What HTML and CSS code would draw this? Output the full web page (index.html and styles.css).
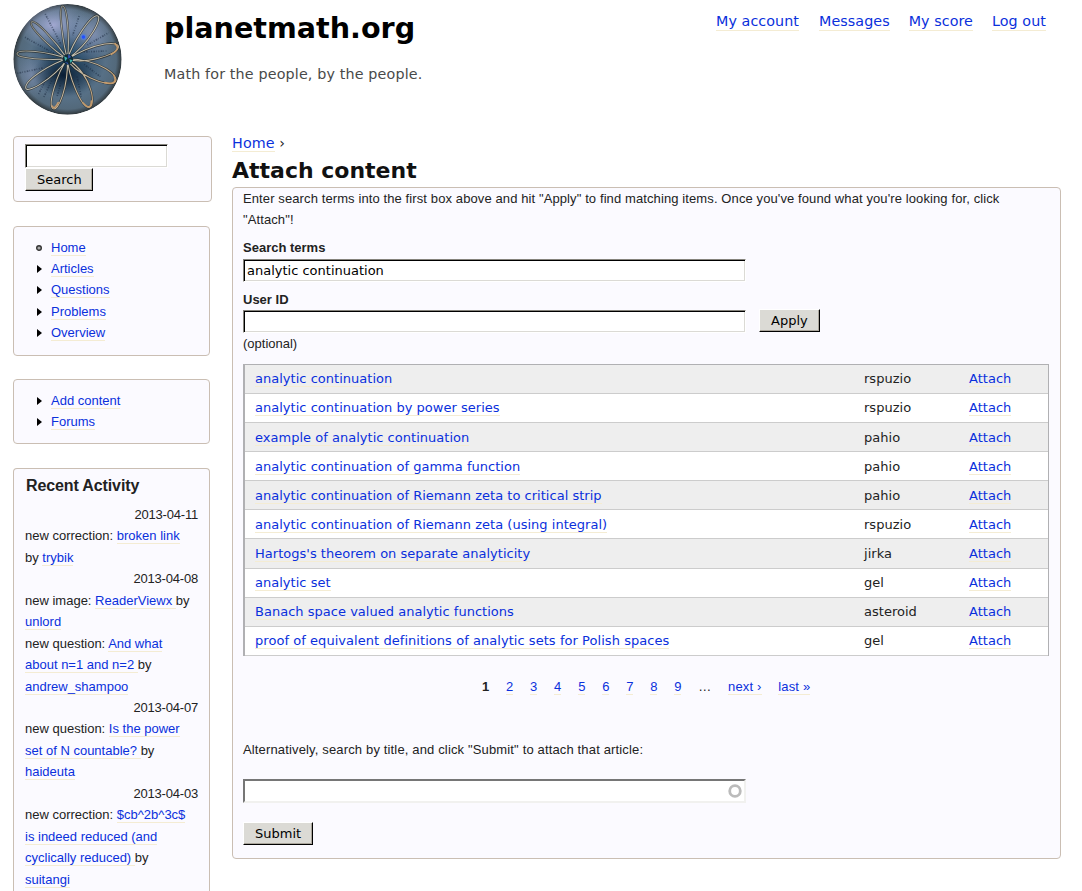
FILE: index.html
```html
<!DOCTYPE html>
<html lang="en">
<head>
<meta charset="utf-8">
<title>Attach content | planetmath.org</title>
<link rel="stylesheet" href="styles.css">
</head>
<body>
<header class="header">
  <svg class="logo" viewBox="39 12 328 333" preserveAspectRatio="none" aria-label="planetmath.org">
    <defs>
      <radialGradient id="orb" cx="50%" cy="50%" r="50%">
        <stop offset="0" stop-color="#204c6b"/><stop offset=".35" stop-color="#36546f"/><stop offset=".7" stop-color="#577086"/><stop offset=".9" stop-color="#53697b"/><stop offset="1" stop-color="#30383c"/>
      </radialGradient>
      <radialGradient id="glow"><stop offset="0" stop-color="#aaaed9" stop-opacity=".9"/><stop offset="1" stop-color="#8ea4c8" stop-opacity="0"/></radialGradient>
      <radialGradient id="shade"><stop offset="0" stop-color="#071b31" stop-opacity=".95"/><stop offset="1" stop-color="#152b3e" stop-opacity="0"/></radialGradient>
      <linearGradient id="rim" gradientUnits="userSpaceOnUse" x1="60" y1="40" x2="340" y2="310"><stop offset="0" stop-color="#77786f"/><stop offset=".5" stop-color="#c4c2b5"/><stop offset="1" stop-color="#c19a6b"/></linearGradient>
      <clipPath id="disc"><ellipse cx="203" cy="178" rx="163" ry="166"/></clipPath>
    </defs>
    <g clip-path="url(#disc)">
      <ellipse cx="203" cy="178" rx="163" ry="166" fill="url(#orb)"/>
      <ellipse cx="160" cy="75" rx="115" ry="75" fill="url(#glow)"/>
      <ellipse cx="275" cy="105" rx="75" ry="80" fill="url(#glow)" opacity=".6"/>
      <ellipse cx="95" cy="225" rx="70" ry="75" fill="url(#glow)" opacity=".4"/>
      <ellipse cx="190" cy="225" rx="95" ry="65" fill="url(#shade)"/>
    </g>
    <g fill="none" stroke="#18253b" stroke-width="5" stroke-dasharray="3 4 5 3 2 5" opacity=".5">
      <path d="M136 42l48 92M75 112l87 48M52 220l76-16M116 282l25-49M132 291l23-49M172 288l12-42M238 48l-20 60M263 135l64-37M252 156l68-3M253 193l50 38M232 230l12 60"/>
    </g>
    <path fill="none" stroke="#242521" stroke-opacity=".75" stroke-width="6.5" stroke-linejoin="round" d="M203 177C190 135 174 18 188 18S210 110 203 177M203 177C165 156 86 82 94 67S167 123 203 177M203 177C145 181 48 176 51 161S145 154 203 177M203 177C158 188 78 238 77 262S160 237 203 177M203 177C171 219 143 315 159 326S205 262 203 177M203 177C205 223 242 319 266 322S282 230 203 177M203 177C220 218 324 264 345 247S298 177 203 177M203 177C252 195 350 165 356 143S291 125 203 177M203 177C219 126 272 46 292 47S272 129 203 177"/>
    <path fill="none" stroke="url(#rim)" stroke-width="3.2" d="M203 177C190 135 174 18 188 18S210 110 203 177M203 177C165 156 86 82 94 67S167 123 203 177M203 177C145 181 48 176 51 161S145 154 203 177M203 177C158 188 78 238 77 262S160 237 203 177M203 177C171 219 143 315 159 326S205 262 203 177M203 177C205 223 242 319 266 322S282 230 203 177M203 177C220 218 324 264 345 247S298 177 203 177M203 177C252 195 350 165 356 143S291 125 203 177M203 177C219 126 272 46 292 47S272 129 203 177"/>
    <g fill="none" stroke="#c39a6c" stroke-width="5" stroke-linecap="round"><path d="M315 248Q358 257 342 225M335 163Q364 147 346 131M250 309Q274 335 275 303M157 318Q163 332 175 308"/></g>
    <circle cx="204" cy="178" r="16" fill="#102b36"/><path d="M193 169l10 5-7 10zM209 178l10 3-7 8z" fill="#3eb6b0"/><path d="M205 162l9 9-9 5zM194 185l10 3 2 6z" fill="#304fb3"/>
    <circle cx="251" cy="111" r="9" fill="#4f7ee4" opacity=".7"/><circle cx="251" cy="111" r="5" fill="#214fff"/>
  </svg>
  <div class="branding">
    <div class="site-name">planetmath.org</div>
    <div class="slogan">Math for the people, by the people.</div>
  </div>
  <nav class="account"><a>My account</a><a>Messages</a><a>My score</a><a>Log out</a></nav>
</header>
<div class="columns">
  <aside class="sidebar">
    <section class="box search-box"><input class="field search-field" aria-label="Search"><button class="button search-button">Search</button></section>
    <section class="box menu-box"><ul class="menu">
      <li><svg class="bullet" viewBox="0 0 7 8"><circle cx="3" cy="4" r="2.3" fill="#aaa" stroke="#333" stroke-width="1.4"/></svg><a>Home</a></li>
      <li><svg class="bullet" viewBox="0 0 7 8"><path d="M1 0l5 4-5 4z"/></svg><a>Articles</a></li>
      <li><svg class="bullet" viewBox="0 0 7 8"><path d="M1 0l5 4-5 4z"/></svg><a>Questions</a></li>
      <li><svg class="bullet" viewBox="0 0 7 8"><path d="M1 0l5 4-5 4z"/></svg><a>Problems</a></li>
      <li><svg class="bullet" viewBox="0 0 7 8"><path d="M1 0l5 4-5 4z"/></svg><a>Overview</a></li>
    </ul></section>
    <section class="box menu-box"><ul class="menu">
      <li><svg class="bullet" viewBox="0 0 7 8"><path d="M1 0l5 4-5 4z"/></svg><a>Add content</a></li>
      <li><svg class="bullet" viewBox="0 0 7 8"><path d="M1 0l5 4-5 4z"/></svg><a>Forums</a></li>
    </ul></section>
    <section class="box activity">
      <h2>Recent Activity</h2>
      <div class="date">2013-04-11</div>
      <div>new correction: <a>broken link</a><br>by <a>trybik</a></div>
      <div class="date">2013-04-08</div>
      <div>new image: <a>ReaderViewx </a>by<br><a>unlord</a></div>
      <div>new question: <a>And what<br>about n=1 and n=2 </a>by<br><a>andrew_shampoo</a></div>
      <div class="date">2013-04-07</div>
      <div>new question: <a>Is the power<br>set of N countable? </a>by<br><a>haideuta</a></div>
      <div class="date">2013-04-03</div>
      <div>new correction: <a>$cb^2b^3c$<br>is indeed reduced (and<br>cyclically reduced) </a>by<br><a>suitangi</a></div>
    </section>
  </aside>
  <main class="main">
    <div class="breadcrumb"><a>Home</a> ›</div>
    <h1>Attach content</h1>
    <section class="box content">
      <p class="help">Enter search terms into the first box above and hit "Apply" to find matching items. Once you've found what you're looking for, click "Attach"!</p>
      <label class="label" for="terms">Search terms</label>
      <input class="field wide" id="terms" value="analytic continuation">
      <label class="label user-label" for="uid">User ID</label>
      <div class="user-row"><input class="field wide" id="uid"><button class="button apply">Apply</button></div>
      <div class="optional">(optional)</div>
      <table class="results">
        <tr><td class="title"><a>analytic continuation</a></td><td class="user">rspuzio</td><td><a>Attach</a></td></tr>
        <tr><td class="title"><a>analytic continuation by power series</a></td><td>rspuzio</td><td><a>Attach</a></td></tr>
        <tr class="low"><td class="title"><a>example of analytic continuation</a></td><td>pahio</td><td><a>Attach</a></td></tr>
        <tr class="low"><td class="title"><a>analytic continuation of gamma function</a></td><td>pahio</td><td><a>Attach</a></td></tr>
        <tr class="low"><td class="title"><a>analytic continuation of Riemann zeta to critical strip</a></td><td>pahio</td><td><a>Attach</a></td></tr>
        <tr class="low"><td class="title"><a>analytic continuation of Riemann zeta (using integral)</a></td><td>rspuzio</td><td><a>Attach</a></td></tr>
        <tr><td class="title"><a>Hartogs's theorem on separate analyticity</a></td><td>jirka</td><td><a>Attach</a></td></tr>
        <tr><td class="title"><a>analytic set</a></td><td>gel</td><td><a>Attach</a></td></tr>
        <tr><td class="title"><a>Banach space valued analytic functions</a></td><td>asteroid</td><td><a>Attach</a></td></tr>
        <tr><td class="title"><a class="spread">proof of equivalent definitions of analytic sets for Polish spaces</a></td><td>gel</td><td><a>Attach</a></td></tr>
      </table>
      <nav class="pager"><b>1</b><a>2</a><a>3</a><a>4</a><a>5</a><a>6</a><a>7</a><a>8</a><a>9</a><span>…</span><a class="word">next ›</a><a class="word">last »</a></nav>
      <p class="alternative">Alternatively, search by title, and click "Submit" to attach that article:</p>
      <div class="autocomplete"><svg class="throbber" viewBox="0 0 14 14"><circle cx="7" cy="7" r="5.3" fill="none" stroke="#bbb" stroke-width="2.8"/></svg></div>
      <button class="button submit">Submit</button>
    </section>
  </main>
</div>
</body>
</html>
```
FILE: styles.css
```css
* { box-sizing: border-box; }
body { margin: 0; background: #fff; color: #222; font: 13px/21.45px "Liberation Sans", Arial, sans-serif; }
a { color: #0a30dc; border-bottom: 1px solid #f4ecd3; text-decoration: none; }
h1, h2, p, ul { margin: 0; padding: 0; }

.header { display: flex; height: 136px; padding: 4px 36px 0 13px; font-family: "DejaVu Sans", sans-serif; }
.logo { width: 109px; height: 111px; flex: none; }
.branding { margin-left: 42px; flex: 1; }
.site-name { color: #000; font-size: 28.6px; font-weight: bold; line-height: 48px; }
.slogan { color: #494949; font-size: 14.3px; line-height: 23px; margin-top: 11px; letter-spacing: .15px; }
.account { display: flex; align-items: flex-start; gap: 20px; padding-top: 9px; font-size: 14.3px; line-height: 16px; letter-spacing: .07px; }
.account a { height: 18px; }
.account a:nth-child(n+3) { margin-left: -1px; }

.columns { display: flex; align-items: flex-start; }
.sidebar { display: flex; flex-direction: column; width: 232px; flex: none; padding-left: 13px; }
.box { border: 1px solid #cabeb3; border-radius: 4px; background: #fbfaff; }
.search-box { display: flex; flex-direction: column; align-items: flex-start; width: 199px; height: 66px; padding: 7px 11px; }
.field { display: block; height: 23px; padding: 0 2px 0 3px; background: #fff; border: 1px solid; border-color: #85837c #fff #fff #85837c; box-shadow: inset 1px 1px #000, inset -1px -1px #dbdad5; border-radius: 0; color: #000; font: 13px "DejaVu Sans", sans-serif; outline: none; }
.search-field { width: 143px; height: 24px; }
.button { height: 23px; padding: 0 11px; border: 1px solid; border-color: #fff #000 #000 #fff; box-shadow: inset -1px -1px #aaa59b; border-radius: 0; background: #dbdad5; color: #000; font: 13px "DejaVu Sans", sans-serif; }
.search-button { width: 68px; }
.menu-box { width: 197px; margin-top: 24px; padding: 10px 22px 11px; }
.menu-box + .menu-box { height: 65px; margin-top: 23px; }
.menu { list-style: none; }
.menu li { display: flex; align-items: center; height: 21.4px; }
.menu a { line-height: 15px; }
.bullet { width: 7px; height: 8px; margin-right: 8px; flex: none; }
.activity { width: 197px; height: 423px; overflow: hidden; margin-top: 24px; padding: 6px 11px 0; white-space: nowrap; border-bottom: 0; border-radius: 4px 4px 0 0; }
.activity h2 { font-size: 16px; line-height: 21px; padding-left: 1px; margin-bottom: 8px; letter-spacing: -.12px; }
.date { text-align: right; letter-spacing: -.2px; }

.main { width: 829px; }
.breadcrumb { height: 15px; font: 14.3px/15px "DejaVu Sans", sans-serif; }
.breadcrumb a { letter-spacing: .15px; }
h1 { margin: 8px 0 5px; color: #111; font: bold 22px/23px "DejaVu Sans", sans-serif; }
.content { height: 672px; padding: 0 11px 0 10px; }
.help { width: 790px; letter-spacing: .105px; }
.label { display: block; font-weight: bold; margin-top: 6px; line-height: 21px; margin-bottom: 1px; }
.wide { width: 503px; }
.user-label { margin-top: 7px; margin-bottom: 0; }
.user-row { display: flex; gap: 13px; }
.apply { margin-top: -1px; }
.optional { line-height: 21px; }
.results { width: 806px; border-collapse: separate; border-spacing: 0; border: solid #b0b0b3; border-width: 1px 1px 0 2px; margin-top: 10px; background: #fff; font-family: "DejaVu Sans", sans-serif; line-height: 18px; table-layout: fixed; letter-spacing: .02px; }
.results td { height: 29.1px; padding: 0; border-bottom: 1px solid #ccc; vertical-align: middle; }
.results .low td { padding-top: 2px; }
.results .title { width: 619px; padding-left: 10px; }
.results .user { width: 105px; }
.results tr:nth-child(odd) { background: #eee; }
.spread { letter-spacing: .05px; }
.pager { display: flex; margin: 23px 0 0 239px; line-height: 15px; gap: 16.8px; }
.word { letter-spacing: .15px; }
.alternative { margin-top: 44px; letter-spacing: .15px; }
.autocomplete { display: flex; align-items: center; justify-content: flex-end; width: 503px; height: 24px; margin-top: 19px; padding-right: 2px; border: 2px solid; border-color: #767676 #f1f1ef #f1f1ef #767676; background: #fff; }
.throbber { width: 14px; height: 14px; }
.submit { display: block; margin-top: 19px; }
```
